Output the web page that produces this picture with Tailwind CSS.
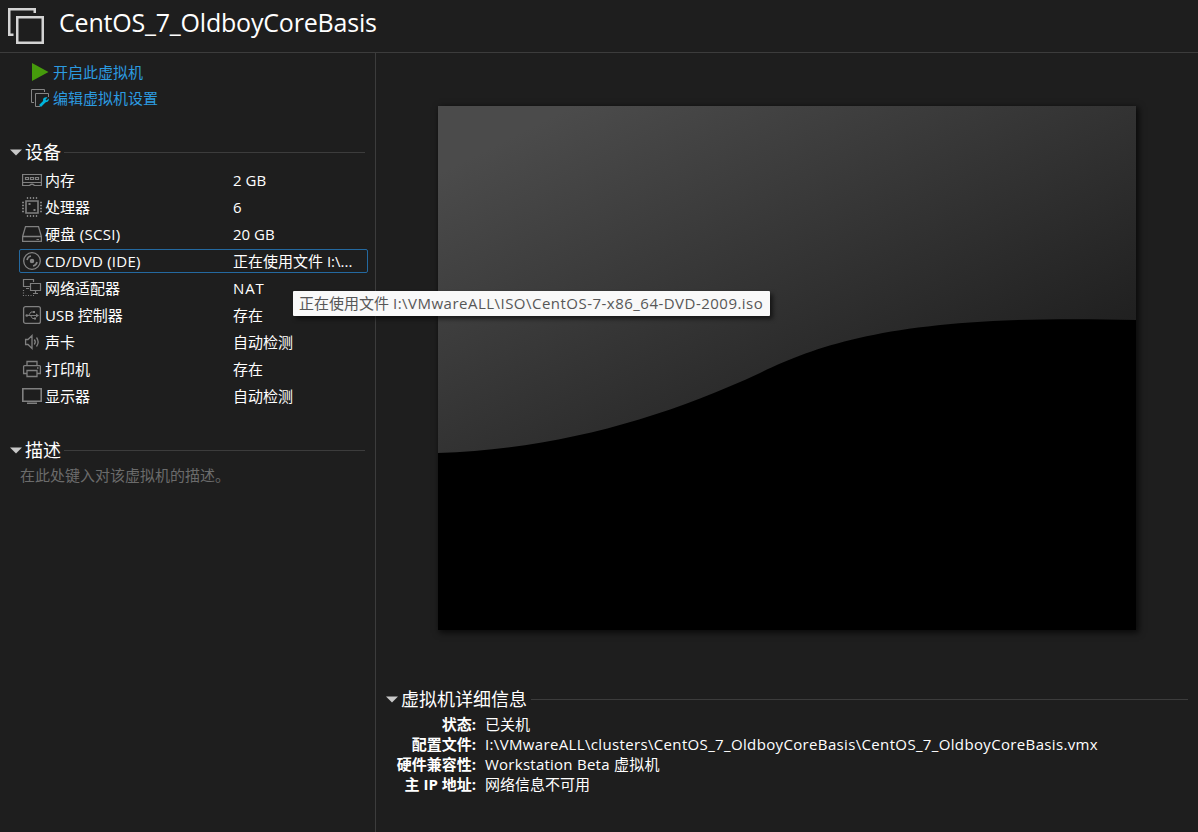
<!DOCTYPE html>
<html lang="zh-CN">
<head>
<meta charset="utf-8">
<title>CentOS_7_OldboyCoreBasis</title>
<script src="https://cdn.jsdelivr.net/npm/@tailwindcss/browser@4"></script>
</head>
<body class="flex h-[832px] w-[1198px] flex-col overflow-hidden bg-[#1e1e1e] font-['Open_Sans','Noto_Sans_CJK_SC',sans-serif] text-[15px] leading-5 text-white">
<header class="flex h-[53px] shrink-0 border-b border-[#3c3c3c] pl-2">
  <svg class="mt-2 h-9 w-9 shrink-0" viewBox="0 0 36 36" fill="none" stroke="#d4d4d4" stroke-width="2.500"><path d="M26.750 5V1.250H1.250V26.750H5.500M9.250 9.250H34.750V34.750H9.250Z"/></svg>
  <h1 class="ml-[15px] mt-[6px] whitespace-nowrap text-[25px] leading-8 tracking-[-0.2px]">CentOS_7_OldboyCoreBasis</h1>
</header>
<main class="flex min-h-0 flex-1">
  <aside class="flex w-[376px] shrink-0 flex-col border-r border-[#3c3c3c]">
    <nav class="flex flex-col gap-1.5 pl-[31px] pt-[9px] text-[#2c9be0]">
      <a class="flex h-5 items-center gap-1"><svg class="h-[18px] w-[18px]" viewBox="0 0 18 18"><path fill="#469b0c" d="M1 0L17.500 9L1 18Z"/></svg>开启此虚拟机</a>
      <a class="flex h-5 items-center gap-1"><svg class="h-[18px] w-[18px]" viewBox="0 0 18 18" fill="none" stroke="#858585"><path d="M13.500 3V.5H.5V13.500H3M9 17.500H4.500V4.500H17.500V8"/><path stroke="#00b4dc" stroke-width="2.600" d="M9 17L14 12"/><path fill="#00b4dc" stroke="none" d="M16.500 8.500L14.500 10.500L15.500 11.500L17.800 9.500C18.300 12 16 13.700 13.500 13L12 11.500C11.800 9.500 13.500 7.700 16.500 8.500Z"/></svg>编辑虚拟机设置</a>
    </nav>
    <section class="mt-[32px]">
      <h2 class="flex h-6 items-center pl-[10px] pr-[10px] text-[18px] leading-6"><svg class="mr-[3px] h-[7px] w-3" viewBox="0 0 12 7"><path fill="#c8c8c8" d="M0 .5H12L6 6.500Z"/></svg>设备<span class="ml-[3px] h-px flex-1 bg-[#3c3c3c]"></span></h2>
      <div class="mt-[3px] pl-[19px] pr-[7px]">
        <div class="flex h-[27px] items-center pb-px pl-[3px]"><svg class="mr-[3px] h-5 w-5" viewBox="0 0 20 20" fill="none" stroke="#808080"><path stroke-width="1.200" d="M.6 4.500H19.400V15.500H12.500Q10 13 7.500 15.500H.6ZM.6 12.500H19.400"/><path stroke-width="1.200" d="M3.500 7.500H6.500V9.500H3.500ZM8.500 7.500H11.500V9.500H8.500ZM13.500 7.500H16.500V9.500H13.500Z"/></svg><span class="w-[188px]">内存</span><span>2 GB</span></div>
        <div class="flex h-[27px] items-center pb-px pl-[3px]"><svg class="mr-[3px] h-5 w-5" viewBox="0 0 20 20" fill="none" stroke="#808080"><path stroke-width="1.600" d="M4 4H16V16H4Z"/><path stroke-width="1.300" d="M5.500 0V2M8.500 0V2M11.500 0V2M14.500 0V2M5.500 18V20M8.500 18V20M11.500 18V20M14.500 18V20M0 5.500H2M0 8.500H2M0 11.500H2M0 14.500H2M18 5.500H20M18 8.500H20M18 11.500H20M18 14.500H20"/><path fill="#808080" stroke="none" d="M6.500 6H8.500V8H6.500ZM11.500 12H13.500V14H11.500Z"/></svg><span class="w-[188px]">处理器</span><span>6</span></div>
        <div class="flex h-[27px] items-center pb-px pl-[3px]"><svg class="mr-[3px] h-5 w-5" viewBox="0 0 20 20" fill="none" stroke="#808080"><path stroke-width="1.300" d="M.6 12.500L3.500 2.600H16.500L19.400 12.500V17.400H.6ZM.6 12.500H19.400"/><path d="M14.500 15.500H17"/></svg><span class="w-[188px] tracking-[0.3px]">硬盘 (SCSI)</span><span>20 GB</span></div>
        <div class="mb-[2px] mt-px flex h-6 items-center rounded-[2px] border border-[#2469a0] pl-[2px]"><svg class="mr-[3px] h-5 w-5" viewBox="0 0 20 20" fill="none" stroke="#858585" stroke-width="1.300"><circle cx="10" cy="10" r="8.300"/><circle cx="10" cy="10" r="1.600" fill="#858585"/><path stroke-width="1.600" d="M5 9A5 5 0 0 1 9 5M11 15A5 5 0 0 0 15 11"/></svg><span class="w-[188px] tracking-[0.25px]">CD/DVD (IDE)</span><span class="whitespace-nowrap">正在使用文件 I:\...</span></div>
        <div class="flex h-[27px] items-center pb-px pl-[3px]"><svg class="mr-[3px] h-5 w-5" viewBox="0 0 20 20" fill="none" stroke="#808080" stroke-width="1.200"><path d="M8 8.500H1.500V1.500H11.500V4M8.500 5.500H18.500V12.500H8.500ZM13.500 12.500V15M11 15.500H16M4 10.500H7"/><path stroke-dasharray="1 1.500" d="M1.500 12V17.500H13"/></svg><span class="w-[188px]">网络适配器</span><span class="tracking-[0.9px]">NAT</span></div>
        <div class="flex h-[27px] items-center pb-px pl-[3px]"><svg class="mr-[3px] h-5 w-5" viewBox="0 0 20 20" fill="none" stroke="#808080"><rect x="1.600" y="1.600" width="16.800" height="16.800" rx="2" stroke-width="1.300"/><path d="M4 10.500H15M6.500 10.500L9 7H11M8.500 10.500L10.500 13.500H12.500"/><path fill="#808080" stroke="none" d="M14 8.500L17 10.500L14 12.500ZM11 6H13V8H11ZM12 12.500H14V14.500H12Z"/><circle cx="4.800" cy="10.500" r="1.300" fill="#808080" stroke="none"/></svg><span class="w-[188px]">USB 控制器</span><span>存在</span></div>
        <div class="flex h-[27px] items-center pb-px pl-[3px]"><svg class="mr-[3px] h-5 w-5" viewBox="0 0 20 20" fill="none" stroke="#808080" stroke-width="1.300"><path d="M3.600 7.500H6L10 3.500V16.500L6 12.500H3.600ZM12.300 7.500Q14.300 10 12.300 12.500M14.500 5.500Q17.800 10 14.500 14.500"/></svg><span class="w-[188px]">声卡</span><span>自动检测</span></div>
        <div class="flex h-[27px] items-center pb-px pl-[3px]"><svg class="mr-[3px] h-5 w-5" viewBox="0 0 20 20" fill="none" stroke="#808080" stroke-width="1.300"><path d="M5 6.500V2.500H15V6.500M5 14.500H1.600V7.500Q1.600 6.600 2.600 6.600H17.400Q18.400 6.600 18.400 7.500V14.500H15M5 11.500H15V17.500H5ZM15 9H16.500"/></svg><span class="w-[188px]">打印机</span><span>存在</span></div>
        <div class="flex h-[27px] items-center pb-px pl-[3px]"><svg class="mr-[3px] h-5 w-5" viewBox="0 0 20 20" fill="none" stroke="#808080" stroke-width="1.600"><path d="M.8 2.800H19.200V15.200H.8ZM5 17.300H15"/></svg><span class="w-[188px]">显示器</span><span>自动检测</span></div>
      </div>
    </section>
    <section class="mt-[28px]">
      <h2 class="flex h-6 items-center pl-[10px] pr-[10px] text-[18px] leading-6"><svg class="mr-[3px] h-[7px] w-3" viewBox="0 0 12 7"><path fill="#c8c8c8" d="M0 .5H12L6 6.500Z"/></svg>描述<span class="ml-[3px] h-px flex-1 bg-[#3c3c3c]"></span></h2>
      <p class="mt-[3px] pl-5 text-[#6b6b6b]">在此处键入对该虚拟机的描述。</p>
    </section>
  </aside>
  <div class="flex flex-1 flex-col">
    <svg class="ml-[62px] mt-[53px] h-[524px] w-[698px] shrink-0 shadow-[2px_2px_6px_1px_rgba(0,0,0,0.65)]" viewBox="0 0 698 524">
      <defs><linearGradient id="shine" gradientUnits="userSpaceOnUse" x1="27" y1="54" x2="225" y2="450"><stop stop-color="#4b4b4b"/><stop offset="1" stop-color="#202020"/></linearGradient></defs>
      <path fill="url(#shine)" d="M0 0H698V524H0Z"/>
      <path d="M0 347C120 343 225 312 322 267C390 234 475 208 698 214V524H0Z"/>
    </svg>
    <section class="mt-[57px] pl-[10px] pr-[10px]">
      <h2 class="flex h-6 items-center text-[18px] leading-6"><svg class="mr-[3px] h-[7px] w-3" viewBox="0 0 12 7"><path fill="#c8c8c8" d="M0 .5H12L6 6.500Z"/></svg>虚拟机详细信息<span class="ml-1 h-px flex-1 bg-[#3c3c3c]"></span></h2>
      <dl class="mt-[3px] grid grid-cols-[90px_1fr] gap-x-[9px] whitespace-nowrap">
        <dt class="text-right font-bold">状态:</dt><dd>已关机</dd>
        <dt class="text-right font-bold">配置文件:</dt><dd class="tracking-[0.35px]">I:\VMwareALL\clusters\CentOS_7_OldboyCoreBasis\CentOS_7_OldboyCoreBasis.vmx</dd>
        <dt class="text-right font-bold">硬件兼容性:</dt><dd class="tracking-[0.25px]">Workstation Beta 虚拟机</dd>
        <dt class="text-right font-bold">主 IP 地址:</dt><dd>网络信息不可用</dd>
      </dl>
    </section>
  </div>
</main>
<div class="absolute left-[293px] top-[291px] flex h-[25px] w-[477px] items-center whitespace-nowrap rounded-[1px] bg-[#f9f9f9] pb-px pl-[6px] text-[#575757] shadow-[3px_3px_4px_rgba(0,0,0,0.55)]">正在使用文件<span class="ml-1 tracking-[0.48px]">I:\VMwareALL\ISO\CentOS-7-x86_64-DVD-2009.iso</span></div>
</body>
</html>
